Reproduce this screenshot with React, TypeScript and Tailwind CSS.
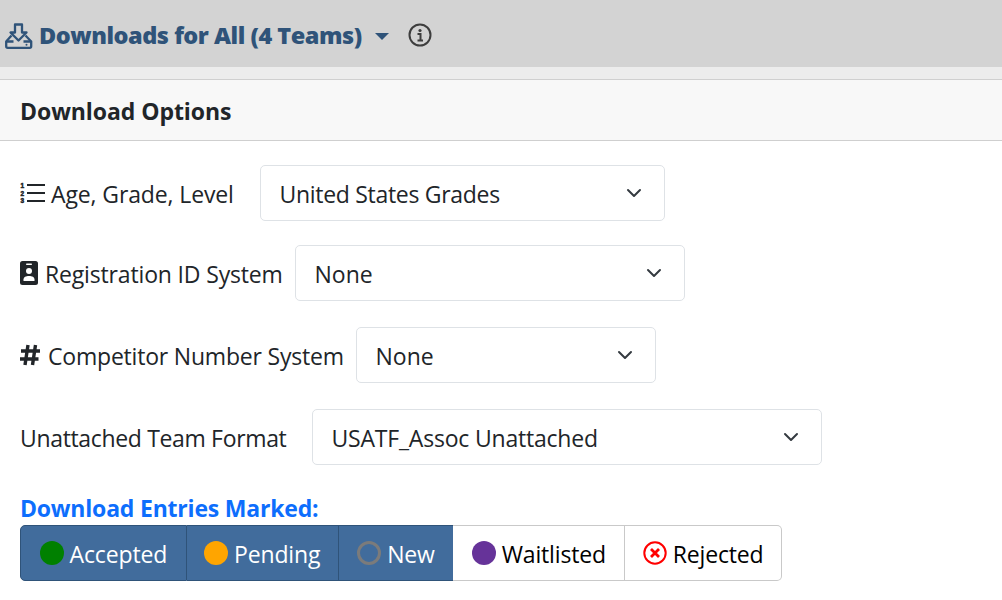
import { ReactNode } from 'react';

function Chevron() {
  return (
    <svg viewBox="0 0 16 16" className="w-4 h-4 shrink-0" fill="none" stroke="#343a40" strokeWidth="2" strokeLinecap="round" strokeLinejoin="round">
      <path d="M2 5l6 6 6-6" />
    </svg>
  );
}

function SelectBox({ value, width, tracking }: { value: string; width: string; tracking: string }) {
  return (
    <div className={`${width} h-14 bg-white border border-[#dee2e6] rounded-[5px] pl-[18.5px] pr-[22px] flex items-center justify-between text-[#212529]`}>
      <span className={`pt-[2px] ${tracking}`}>{value}</span>
      <Chevron />
    </div>
  );
}

function Row({ icon, label, lead, tracking, children, className }: { icon?: ReactNode; label: string; lead: string; tracking: string; children: ReactNode; className: string }) {
  return (
    <div className={`flex items-center ${className}`}>
      <div className={`flex items-center shrink-0 ${lead}`}>
        {icon}
        <span className={`pt-[2px] text-[#212529] ${tracking}`}>{label}</span>
      </div>
      {children}
    </div>
  );
}

function Seg({ label, dot, active, className }: { label: string; dot: ReactNode; active?: boolean; className: string }) {
  return (
    <div className={`h-14 flex items-center justify-center gap-[6px] border-r tracking-[-0.15px] ${active ? 'bg-[#416c9c] text-white border-[#2f5379]' : 'bg-white text-black border-[#c9c9c9]'} ${className}`}>
      {dot}
      <span className="pt-[3px]">{label}</span>
    </div>
  );
}

export default function App() {
  return (
    <div className="w-[1002px] h-[600px] overflow-hidden bg-white text-[23px] font-['Open_Sans','Noto_Sans',sans-serif] tracking-[-0.3px]">
      <div className="h-[67px] bg-[#d3d3d3] flex items-center pl-[5px] pt-[5px]">
        <svg viewBox="0 0 28 26" className="w-[28px] h-[26px]" fill="none" stroke="#2f5379" strokeWidth="2.300" strokeLinejoin="round">
          <path d="M10 1.500h7v8h4.500L13.500 17.500 5.500 9.500H10z" />
          <path d="M6.500 12.500L1.200 18.500v4.800a1.500 1.500 0 0 0 1.500 1.500h22a1.500 1.500 0 0 0 1.500-1.500v-4.800L20.500 12.500" />
          <path d="M1.200 18.500h7.300M26.200 18.500h-7.700" />
          <circle cx="21.500" cy="21.800" r="1" fill="#2f5379" stroke="none" />
        </svg>
        <span className="ml-[6px] text-[#2f5379] font-extrabold text-[23.5px] tracking-[-0.48px]">Downloads for All (4 Teams)</span>
        <div className="ml-[13px] w-0 h-0 border-x-[7px] border-x-transparent border-t-[7px] border-t-[#2f5379]" />
        <svg viewBox="0 0 24 24" className="ml-[19px] w-[24px] h-[24px] -mt-[3px]" fill="none" stroke="#3d3d3d">
          <circle cx="12" cy="12" r="10.500" strokeWidth="2" />
          <circle cx="12" cy="7.500" r="1.600" fill="#3d3d3d" stroke="none" />
          <path d="M9.500 11h3v6M9.500 17.500h5.500" strokeWidth="2" />
        </svg>
      </div>
      <div className="h-3 bg-[#ececec]" />
      <div className="h-[62px] bg-[#f8f8f8] border-y border-[#cfcfcf] flex items-center pl-[20px] pt-[3px]">
        <span className="font-bold text-[#212529] text-[23px] tracking-[-0.06px]">Download Options</span>
      </div>
      <div className="pl-[20px] pt-6">
        <Row
          className="h-14"
          label="Age, Grade, Level"
          lead="w-[240px]"
          tracking="tracking-[-0.12px]"
          icon={
            <svg viewBox="0 0 25 22" className="w-[25px] h-[22px] mr-[6px]" fill="#212529" stroke="#212529">
              <rect x="7" y="2" width="18" height="2" stroke="none" />
              <rect x="7" y="10" width="18" height="2" stroke="none" />
              <rect x="7" y="18" width="18" height="2" stroke="none" />
              <text x="0.500" y="6" fontSize="6.500" fontWeight="700" strokeWidth="0.500" fontFamily="'Liberation Sans', sans-serif">1</text>
              <text x="0.500" y="13.600" fontSize="6.500" fontWeight="700" strokeWidth="0.500" fontFamily="'Liberation Sans', sans-serif">2</text>
              <text x="0.500" y="21.200" fontSize="6.500" fontWeight="700" strokeWidth="0.500" fontFamily="'Liberation Sans', sans-serif">3</text>
            </svg>
          }
        >
          <SelectBox value="United States Grades" width="w-[405px]" tracking="" />
        </Row>
        <Row
          className="h-14 mt-6"
          label="Registration ID System"
          lead="w-[275px]"
          tracking="tracking-[-0.16px]"
          icon={
            <svg viewBox="0 0 18 24" className="w-[18px] h-[24px] mr-[7px]">
              <rect width="18" height="24" rx="2.500" fill="#212529" />
              <rect x="6" y="2.500" width="6" height="1.500" rx="0.700" fill="#fff" />
              <circle cx="9" cy="10" r="3" fill="#fff" />
              <path d="M3.500 20v-1.500c0-2.500 2.500-3.500 5.500-3.500s5.500 1 5.500 3.500V20z" fill="#fff" />
            </svg>
          }
        >
          <SelectBox value="None" width="w-[390px]" tracking="tracking-[0px]" />
        </Row>
        <Row
          className="h-14 mt-[26px]"
          label="Competitor Number System"
          lead="w-[336px]"
          tracking="tracking-[-0.2px]"
          icon={
            <svg viewBox="0 0 20 22" className="w-[20px] h-[22px] mr-[8px]" fill="none" stroke="#212529" strokeWidth="3.400">
              <path d="M8 1L5 21M15.500 1L12.500 21M1 7h19M0 15h18.500" />
            </svg>
          }
        >
          <SelectBox value="None" width="w-[300px]" tracking="tracking-[0px]" />
        </Row>
        <Row className="h-14 mt-[26px]" label="Unattached Team Format" lead="w-[292px]" tracking="tracking-[-0.34px]">
          <SelectBox value="USATF_Assoc Unattached" width="w-[510px]" tracking="tracking-[-0.2px]" />
        </Row>
        <div className="mt-[27px] h-[33px] leading-[33px] font-bold text-[#0d6efd] text-[23px] tracking-[-0.2px]">Download Entries Marked:</div>
        <div className="flex w-[762px]">
          <Seg
            active
            label="Accepted"
            className="w-[167px] rounded-l-[5px] border-y border-l"
            dot={<div className="w-6 h-6 rounded-full bg-[#008000]" />}
          />
          <Seg
            active
            label="Pending"
            className="w-[152px] border-y"
            dot={<div className="w-6 h-6 rounded-full bg-[#ffa500]" />}
          />
          <Seg
            active
            label="New"
            className="w-[115px] border-y border-r-0"
            dot={<div className="w-6 h-6 rounded-full border-[3px] border-[#7b7b7b]" />}
          />
          <Seg
            label="Waitlisted"
            className="w-[172px] border-y"
            dot={<div className="w-6 h-6 rounded-full bg-[#663399]" />}
          />
          <Seg
            label="Rejected"
            className="w-[157px] border-y rounded-r-[5px]"
            dot={
              <svg viewBox="0 0 24 24" className="w-6 h-6" fill="none" stroke="#ff0000">
                <circle cx="12" cy="12" r="10.700" strokeWidth="2" />
                <path d="M8 8l8 8M16 8l-8 8" strokeWidth="2.800" />
              </svg>
            }
          />
        </div>
      </div>
    </div>
  );
}
